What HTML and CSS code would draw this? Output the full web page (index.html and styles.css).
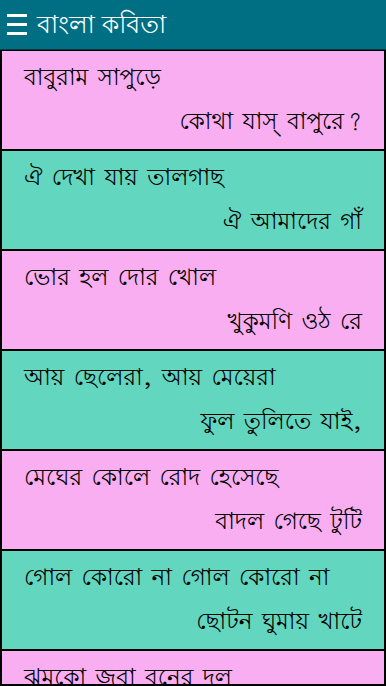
FILE: index.html
```html
<!DOCTYPE html>
<html lang="bn">
<head>
  <meta charset="UTF-8">
  <title>বাংলা কবিতা</title>
  <link rel="stylesheet" href="styles.css">
</head>
<body>

  <header class="app-bar">
    <div class="menu-icon">
      <span></span>
      <span></span>
      <span></span>
    </div>
    <h1>বাংলা কবিতা</h1>
  </header>

  <div class="poem-list">
    <div class="poem pink">
      <p class="first">বাবুরাম সাপুড়ে</p>
      <p class="second">কোথা যাস্ বাপুরে?</p>
    </div>
    <div class="poem green">
      <p class="first">ঐ দেখা যায় তালগাছ</p>
      <p class="second">ঐ আমাদের গাঁ</p>
    </div>
    <div class="poem pink">
      <p class="first">ভোর হল দোর খোল</p>
      <p class="second">খুকুমণি ওঠ রে</p>
    </div>
    <div class="poem green">
      <p class="first">আয় ছেলেরা, আয় মেয়েরা</p>
      <p class="second">ফুল তুলিতে যাই,</p>
    </div>
    <div class="poem pink">
      <p class="first">মেঘের কোলে রোদ হেসেছে</p>
      <p class="second">বাদল গেছে টুটি</p>
    </div>
    <div class="poem green">
      <p class="first">গোল কোরো না গোল কোরো না</p>
      <p class="second">ছোটন ঘুমায় খাটে</p>
    </div>
    <div class="poem pink">
      <p class="first">ঝমকো জবা বনের দল</p>
    </div>
  </div>

</body>
</html>
```

FILE: styles.css
```css
* {
  box-sizing: border-box;
}

body {
  margin: 0;
  padding: 0;
  background: #000;
  font-family: "Lohit Bengali", "Noto Sans Bengali", "Noto Sans", sans-serif;
  overflow: hidden;
}

.app-bar {
  display: flex;
  align-items: center;
  height: 50px;
  padding: 0 7px;
  background-color: #006f84;
  border-bottom: 1px solid #0a3a40;
}

.menu-icon {
  display: flex;
  flex-direction: column;
  gap: 6px;
  width: 20px;
  margin-right: 10px;
}

.menu-icon span {
  display: block;
  height: 3px;
  background: #fff;
}

.app-bar h1 {
  margin: 0;
  padding-top: 4px;
  color: white;
  font-size: 25px;
  font-weight: normal;
}

.poem-list {
  display: flex;
  flex-direction: column;
  gap: 2px;
  height: 636px;
  border: 2px solid #000;
  border-top-width: 1px;
  overflow: hidden;
}

.poem {
  flex-shrink: 0;
  height: 98px;
  padding: 6px 22px 0 22px;
  color: #000;
  font-size: 23px;
  word-spacing: 3px;
}

.poem p {
  margin: 0;
  line-height: 44px;
}

.poem .second {
  text-align: right;
}

.pink {
  background: #f8aef0;
}

.green {
  background: #62d6be;
}
```
